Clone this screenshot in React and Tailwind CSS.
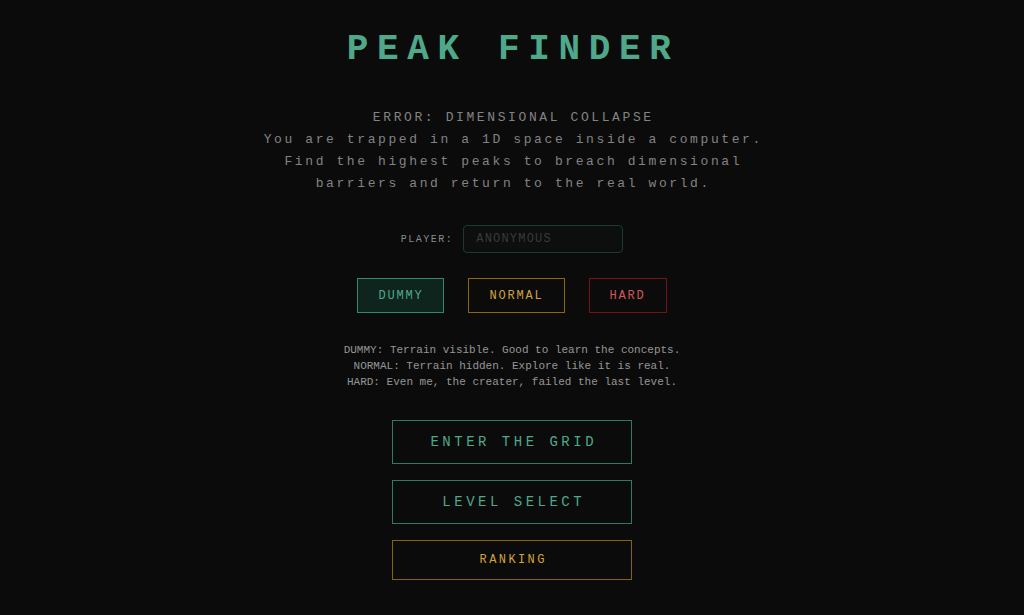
import React, { useState } from 'react';

const modes = [
  { id: 'dummy', label: 'DUMMY', active: 'border-[#2e8a6a] bg-[#10241e] text-[#4fa88a]', idle: 'border-[#2e8a6a] text-[#4fa88a]' },
  { id: 'normal', label: 'NORMAL', active: 'border-[#8e6510] bg-[#1e1707] text-[#d4a23a]', idle: 'border-[#8e6510] text-[#d4a23a]' },
  { id: 'hard', label: 'HARD', active: 'border-[#761212] bg-[#200c0c] text-[#d65656]', idle: 'border-[#761212] text-[#d65656]' },
];

export default function App() {
  const [mode, setMode] = useState('dummy');
  const [name, setName] = useState('');

  return (
    <div className="min-h-screen bg-[#0b0b0b] font-['Courier_New','Liberation_Mono',monospace] text-[#8a8a8a] flex flex-col items-center">
      <h1 className="mt-[28px] text-[36px] leading-[44px] font-bold tracking-[0.24em] pl-[0.06em] text-[#4fa88a]">
        PEAK FINDER
      </h1>

      <div className="mt-[35px] text-center text-[13px] leading-[22px] tracking-[0.2em] pl-[0.2em] text-[#838383]">
        <p>ERROR: DIMENSIONAL COLLAPSE</p>
        <p>You are trapped in a 1D space inside a computer.</p>
        <p>Find the highest peaks to breach dimensional</p>
        <p>barriers and return to the real world.</p>
      </div>

      <div className="mt-[30px] flex items-center gap-[10px]">
        <label className="text-[10px] tracking-[0.15em] text-[#8a8a8a]">PLAYER:</label>
        <input
          value={name}
          onChange={(e) => setName(e.target.value)}
          placeholder="ANONYMOUS"
          className="w-[160px] h-[28px] px-[12px] rounded-[4px] border border-[#1c3a30] bg-[#0c0f0e] text-[12px] tracking-[0.1em] text-[#8a8a8a] placeholder:text-[#3a3a3a] outline-none"
        />
      </div>

      <div className="mt-[25px] flex gap-[24px]">
        {modes.map((m) => (
          <button
            key={m.id}
            onClick={() => setMode(m.id)}
            className={`h-[35px] px-[20px] border text-[12px] tracking-[0.15em] ${mode === m.id ? m.active : m.idle}`}
          >
            {m.label}
          </button>
        ))}
      </div>

      <div className="mt-[29px] text-center text-[11px] leading-[16px] text-[#969696]">
        <p>DUMMY: Terrain visible. Good to learn the concepts.</p>
        <p>NORMAL: Terrain hidden. Explore like it is real.</p>
        <p>HARD: Even me, the creater, failed the last level.</p>
      </div>

      <div className="mt-[30px] flex flex-col gap-[16px] w-[240px]">
        <button className="h-[44px] border border-[#2e7a62] text-[14px] tracking-[0.25em] pl-[0.25em] text-[#4fa88a]">
          ENTER THE GRID
        </button>
        <button className="h-[44px] border border-[#2e7a62] text-[14px] tracking-[0.25em] pl-[0.25em] text-[#4fa88a]">
          LEVEL SELECT
        </button>
        <button className="h-[40px] border border-[#86620f] text-[12px] tracking-[0.2em] pl-[0.2em] text-[#d4a23a]">
          RANKING
        </button>
      </div>
    </div>
  );
}
